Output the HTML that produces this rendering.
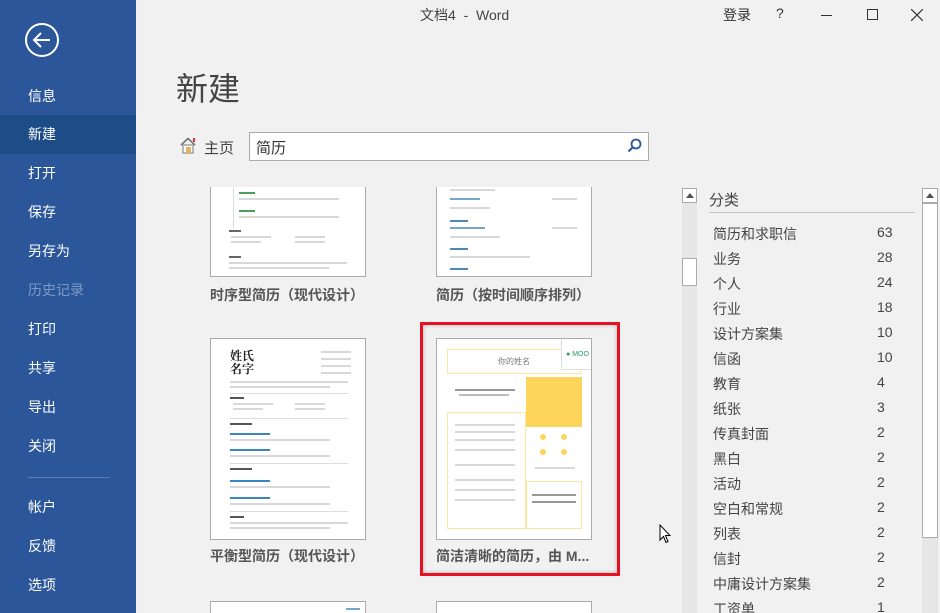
<!DOCTYPE html>
<html style="overflow:hidden;width:940px;height:613px"><head><meta charset="utf-8"><style>
*{margin:0;padding:0;box-sizing:border-box}
body{width:940px;height:613px;overflow:hidden;background:#f1f1f1;font-family:"Liberation Sans","Noto Sans CJK SC",sans-serif;position:relative;color:#444}
.side{position:absolute;left:0;top:0;width:136px;height:613px;background:#2b579a}
.side .it{position:absolute;left:28px;color:#fff;font-size:14px}
.sel{position:absolute;left:0;top:115px;width:136px;height:39px;background:#1d4c86}
.abs{position:absolute}
.thumb{position:absolute;background:#fff;border:1px solid #ababab;overflow:hidden}
.lbl{position:absolute;font-size:14px;font-weight:bold;color:#555}
.ln{position:absolute;height:2px;background:#d8d8d8}
.cat{position:absolute;left:713px;font-size:14px;color:#444}
.num{position:absolute;left:877px;font-size:14px;color:#444}
</style></head><body>
<div class="side">
<span class="sel"></span>
<svg class="abs" style="left:24px;top:22px" width="36" height="36" viewBox="0 0 36 36"><circle cx="18" cy="18" r="16" fill="none" stroke="#fff" stroke-width="2"/><path d="M10 18H26M17 11L10 18L17 25" fill="none" stroke="#fff" stroke-width="2"/></svg>
<div class="it" style="top:86px">信息</div>
<div class="it" style="top:124px">新建</div>
<div class="it" style="top:163px">打开</div>
<div class="it" style="top:202px">保存</div>
<div class="it" style="top:241px">另存为</div>
<div class="it" style="top:280px;color:#7f9ac2">历史记录</div>
<div class="it" style="top:319px">打印</div>
<div class="it" style="top:358px">共享</div>
<div class="it" style="top:397px">导出</div>
<div class="it" style="top:436px">关闭</div>
<span class="abs" style="left:28px;top:477px;width:82px;height:1px;background:#5b7db4"></span>
<div class="it" style="top:497px">帐户</div>
<div class="it" style="top:536px">反馈</div>
<div class="it" style="top:575px">选项</div>
</div>
<div class="abs" style="left:420px;top:5px;font-size:14px;color:#444">文档4&nbsp; -&nbsp; Word</div>
<div class="abs" style="left:723px;top:5px;font-size:14px;color:#333">登录</div>
<div class="abs" style="left:776px;top:5px;font-size:14px;color:#333">?</div>
<span class="abs" style="left:821px;top:15px;width:11px;height:1px;background:#333"></span>
<span class="abs" style="left:867px;top:9px;width:11px;height:11px;border:1px solid #333"></span>
<svg class="abs" style="left:911px;top:9px" width="12" height="12"><path d="M0 0L12 12M12 0L0 12" stroke="#333" stroke-width="1.2"/></svg>
<div class="abs" style="left:176px;top:64px;font-size:32px;color:#444">新建</div>
<svg class="abs" style="left:179px;top:137px" width="18" height="17" viewBox="0 0 18 17"><path d="M2 8L9 1.5L16 8" fill="none" stroke="#666" stroke-width="1.5"/><rect x="4" y="8" width="10" height="8" fill="#fff" stroke="#777"/><rect x="7" y="10" width="5" height="6" fill="#e4b25a"/><rect x="14" y="1" width="2" height="4" fill="#d33"/></svg>
<div class="abs" style="left:204px;top:137px;font-size:15px;color:#444">主页</div>
<div class="abs" style="left:249px;top:132px;width:400px;height:29px;background:#fff;border:1px solid #ababab"></div>
<div class="abs" style="left:256px;top:137px;font-size:15px;color:#333">简历</div>
<svg class="abs" style="left:627px;top:138px" width="15" height="15"><circle cx="9" cy="6" r="4.5" fill="none" stroke="#2b579a" stroke-width="1.8"/><path d="M6 9L1.5 13.5" stroke="#2b579a" stroke-width="2"/></svg>

<div class="abs" style="left:200px;top:187px;width:420px;height:426px;overflow:hidden">
<div class="thumb" style="left:10px;top:-5px;width:156px;height:95px;border-top:none">
 <span class="abs" style="left:22px;top:2px;width:1px;height:45px;background:#ddd"></span>
 <span class="ln" style="left:28px;top:10px;width:16px;background:#4a9d5a"></span><span class="ln" style="left:28px;top:16px;width:100px"></span>
 <span class="ln" style="left:28px;top:28px;width:16px;background:#4a9d5a"></span><span class="ln" style="left:28px;top:34px;width:100px"></span>
 <span class="ln" style="left:18px;top:48px;width:12px;background:#666"></span>
 <span class="ln" style="left:20px;top:54px;width:40px"></span><span class="ln" style="left:84px;top:54px;width:30px"></span>
 <span class="ln" style="left:20px;top:59px;width:30px"></span><span class="ln" style="left:84px;top:59px;width:30px"></span>
 <span class="ln" style="left:18px;top:74px;width:12px;background:#666"></span>
 <span class="ln" style="left:18px;top:80px;width:118px"></span><span class="ln" style="left:18px;top:85px;width:100px"></span>
</div>
<div class="thumb" style="left:236px;top:-5px;width:156px;height:95px;border-top:none">
 <span class="ln" style="left:13px;top:7px;width:45px"></span>
 <span class="ln" style="left:13px;top:16px;width:30px;background:#7aa6c6"></span><span class="ln" style="left:115px;top:16px;width:25px"></span>
 <span class="ln" style="left:13px;top:25px;width:40px"></span>
 <span class="ln" style="left:13px;top:38px;width:18px;background:#4b8ab8"></span>
 <span class="ln" style="left:13px;top:45px;width:35px;background:#7aa6c6"></span><span class="ln" style="left:115px;top:45px;width:25px"></span>
 <span class="ln" style="left:13px;top:54px;width:50px"></span>
 <span class="ln" style="left:13px;top:66px;width:18px;background:#4b8ab8"></span>
 <span class="ln" style="left:13px;top:74px;width:80px"></span>
 <span class="ln" style="left:13px;top:86px;width:18px;background:#4b8ab8"></span>
</div>
<div class="thumb" style="left:10px;top:414px;width:156px;height:20px"><span class="ln" style="left:135px;top:6px;width:14px;background:#7aa6c6"></span></div>
<div class="thumb" style="left:236px;top:414px;width:156px;height:20px"></div>
</div>
<div class="lbl" style="left:210px;top:285px">时序型简历（现代设计）</div>
<div class="lbl" style="left:436px;top:285px">简历（按时间顺序排列）</div>

<div class="thumb" style="left:210px;top:338px;width:156px;height:202px">
 <div class="abs" style="left:19px;top:10px;font-size:12px;line-height:13px;color:#222;font-family:'Noto Serif CJK SC',serif;font-weight:bold">姓氏<br>名字</div>
 <span class="ln" style="left:110px;top:12px;width:30px"></span><span class="ln" style="left:110px;top:19px;width:30px"></span><span class="ln" style="left:110px;top:26px;width:30px"></span><span class="ln" style="left:110px;top:33px;width:30px"></span>
 <span class="ln" style="left:19px;top:42px;width:118px"></span><span class="ln" style="left:19px;top:47px;width:100px"></span>
 <span class="abs" style="left:19px;top:54px;width:118px;height:1px;background:#ddd"></span>
 <span class="ln" style="left:19px;top:58px;width:14px;background:#555"></span>
 <span class="ln" style="left:22px;top:64px;width:40px"></span><span class="ln" style="left:84px;top:64px;width:30px"></span>
 <span class="ln" style="left:22px;top:69px;width:30px"></span><span class="ln" style="left:84px;top:69px;width:30px"></span>
 <span class="abs" style="left:19px;top:79px;width:118px;height:1px;background:#ddd"></span>
 <span class="ln" style="left:19px;top:84px;width:22px;background:#555"></span>
 <span class="ln" style="left:19px;top:94px;width:40px;background:#3a86c0"></span><span class="ln" style="left:19px;top:100px;width:100px"></span>
 <span class="ln" style="left:19px;top:110px;width:40px;background:#3a86c0"></span><span class="ln" style="left:19px;top:116px;width:100px"></span>
 <span class="abs" style="left:19px;top:124px;width:118px;height:1px;background:#ddd"></span>
 <span class="ln" style="left:19px;top:129px;width:22px;background:#555"></span>
 <span class="ln" style="left:19px;top:141px;width:40px;background:#3a86c0"></span><span class="ln" style="left:19px;top:147px;width:100px"></span>
 <span class="ln" style="left:19px;top:158px;width:40px;background:#3a86c0"></span><span class="ln" style="left:19px;top:164px;width:100px"></span>
 <span class="abs" style="left:19px;top:172px;width:118px;height:1px;background:#ddd"></span>
 <span class="ln" style="left:19px;top:177px;width:14px;background:#555"></span>
 <span class="ln" style="left:19px;top:183px;width:118px"></span><span class="ln" style="left:19px;top:188px;width:100px"></span>
</div>
<div class="thumb" style="left:436px;top:338px;width:156px;height:202px">
 <div class="abs" style="left:10px;top:10px;width:134px;height:25px;border:1px solid #fde7a5;font-size:8px;color:#777;text-align:center;line-height:23px">你的姓名</div>
 <div class="abs" style="left:124px;top:0;width:32px;height:31px;background:#fff;border-left:1px solid #ddd;border-bottom:1px solid #ddd;font-size:7px;color:#2a9d5c;line-height:31px;text-align:center">● MOO</div>
 <span class="ln" style="left:18px;top:50px;width:60px;background:#999"></span><span class="ln" style="left:22px;top:55px;width:50px;background:#bbb"></span>
 <div class="abs" style="left:89px;top:38px;width:56px;height:50px;background:#fdd55a"></div>
 <div class="abs" style="left:10px;top:73px;width:79px;height:117px;border:1px solid #fde7a5"></div>
 <span class="ln" style="left:18px;top:85px;width:60px"></span><span class="ln" style="left:18px;top:92px;width:60px"></span><span class="ln" style="left:18px;top:100px;width:60px"></span><span class="ln" style="left:18px;top:110px;width:60px"></span><span class="ln" style="left:18px;top:125px;width:60px"></span><span class="ln" style="left:18px;top:140px;width:60px"></span><span class="ln" style="left:18px;top:150px;width:60px"></span><span class="ln" style="left:18px;top:160px;width:60px"></span>
 <span class="abs" style="left:103px;top:95px;width:6px;height:6px;border-radius:3px;background:#fdd55a"></span><span class="abs" style="left:124px;top:95px;width:6px;height:6px;border-radius:3px;background:#fdd55a"></span>
 <span class="abs" style="left:103px;top:110px;width:6px;height:6px;border-radius:3px;background:#fdd55a"></span><span class="abs" style="left:124px;top:110px;width:6px;height:6px;border-radius:3px;background:#fdd55a"></span>
 <span class="ln" style="left:98px;top:128px;width:40px"></span>
 <div class="abs" style="left:89px;top:142px;width:56px;height:48px;border:1px solid #fde7a5"></div>
 <span class="ln" style="left:95px;top:155px;width:44px;background:#999"></span><span class="ln" style="left:95px;top:162px;width:44px;background:#999"></span>
</div>
<div class="abs" style="left:420px;top:322px;width:200px;height:254px;border:3px solid #e81123;box-shadow:inset 0 0 4px rgba(0,0,0,.25)"></div>
<div class="lbl" style="left:210px;top:546px">平衡型简历（现代设计）</div>
<div class="lbl" style="left:436px;top:546px;width:160px">简洁清晰的简历，由 M...</div>

<svg class="abs" style="left:659px;top:524px" width="12" height="20"><path d="M1 1L1 16L4.5 12.5L7 18.5L9 17.5L6.5 11.5L11 11.5Z" fill="#fff" stroke="#000"/></svg>

<div class="abs" style="left:682px;top:188px;width:15px;height:425px;background:#e6e6e6"></div>
<div class="abs" style="left:682px;top:188px;width:15px;height:15px;background:#fff;border:1px solid #ababab"><svg class="abs" style="left:3px;top:4px" width="8" height="5"><path d="M0 5L4 0L8 5Z" fill="#555"/></svg></div>
<div class="abs" style="left:682px;top:258px;width:15px;height:28px;background:#fff;border:1px solid #ababab"></div>
<div class="abs" style="left:709px;top:189px;font-size:15px;color:#444">分类</div>
<span class="abs" style="left:709px;top:212px;width:206px;height:1px;background:#c0c0c0"></span>
<div class="cat" style="top:224px">简历和求职信</div><div class="num" style="top:224px">63</div>
<div class="cat" style="top:249px">业务</div><div class="num" style="top:249px">28</div>
<div class="cat" style="top:274px">个人</div><div class="num" style="top:274px">24</div>
<div class="cat" style="top:299px">行业</div><div class="num" style="top:299px">18</div>
<div class="cat" style="top:324px">设计方案集</div><div class="num" style="top:324px">10</div>
<div class="cat" style="top:349px">信函</div><div class="num" style="top:349px">10</div>
<div class="cat" style="top:374px">教育</div><div class="num" style="top:374px">4</div>
<div class="cat" style="top:399px">纸张</div><div class="num" style="top:399px">3</div>
<div class="cat" style="top:424px">传真封面</div><div class="num" style="top:424px">2</div>
<div class="cat" style="top:449px">黑白</div><div class="num" style="top:449px">2</div>
<div class="cat" style="top:474px">活动</div><div class="num" style="top:474px">2</div>
<div class="cat" style="top:499px">空白和常规</div><div class="num" style="top:499px">2</div>
<div class="cat" style="top:524px">列表</div><div class="num" style="top:524px">2</div>
<div class="cat" style="top:549px">信封</div><div class="num" style="top:549px">2</div>
<div class="cat" style="top:574px">中庸设计方案集</div><div class="num" style="top:574px">2</div>
<div class="cat" style="top:599px">工资单</div><div class="num" style="top:599px">1</div>
<div class="abs" style="left:922px;top:188px;width:16px;height:425px;background:#e6e6e6"></div>
<div class="abs" style="left:922px;top:188px;width:16px;height:15px;background:#fff;border:1px solid #ababab"><svg class="abs" style="left:3px;top:4px" width="8" height="5"><path d="M0 5L4 0L8 5Z" fill="#555"/></svg></div>
<div class="abs" style="left:922px;top:203px;width:16px;height:335px;background:#fff;border:1px solid #ababab"></div>
</body></html>
